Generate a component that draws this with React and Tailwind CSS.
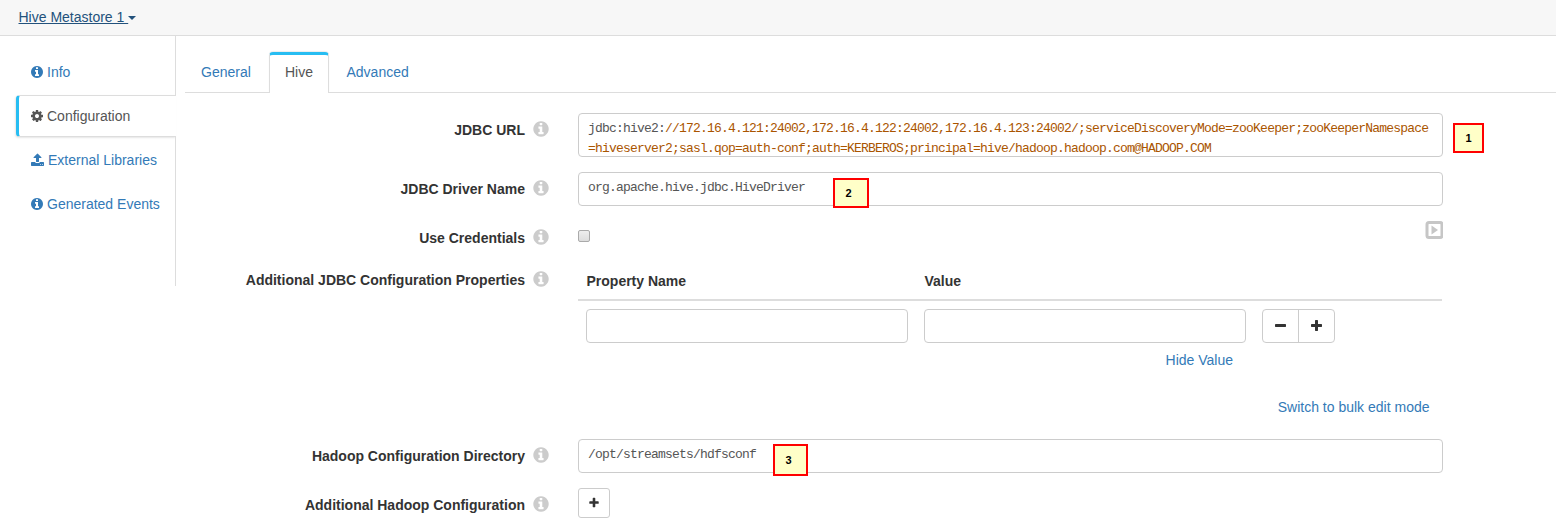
import React from "react";

const PATHS = {
  info: "M1152 1376v-160q0-14-9-23t-23-9h-96v-512q0-14-9-23t-23-9h-320q-14 0-23 9t-9 23v160q0 14 9 23t23 9h96v320h-96q-14 0-23 9t-9 23v160q0 14 9 23t23 9h448q14 0 23-9t9-23zm-128-896v-160q0-14-9-23t-23-9h-192q-14 0-23 9t-9 23v160q0 14 9 23t23 9h192q14 0 23-9t9-23zm640 416q0 209-103 385.5t-279.5 279.5-385.5 103-385.5-103-279.5-279.5-103-385.5 103-385.5 279.5-279.5 385.5-103 385.5 103 279.5 279.5 103 385.5z",
  cog: "M1152 896q0-106-75-181t-181-75-181 75-75 181 75 181 181 75 181-75 75-181zm512-109v222q0 12-8 23t-20 13l-185 28q-19 54-39 91 35 50 107 138 10 12 10 25t-9 23q-27 37-99 108t-94 71q-12 0-26-9l-138-108q-44 23-91 38-16 136-29 186-7 28-36 28h-222q-14 0-24.5-8.5t-11.5-21.5l-28-184q-49-16-90-37l-141 107q-10 9-25 9-14 0-25-11-126-114-165-168-7-10-7-23 0-12 8-23 15-21 51-66.5t54-70.5q-27-50-41-99l-183-27q-13-2-21-12.5t-8-23.5v-222q0-12 8-23t19-13l186-28q14-46 39-92-40-57-107-138-10-12-10-24 0-10 9-23 26-36 98.5-107.5t94.5-71.5q13 0 26 10l138 107q44-23 91-38 16-136 29-186 7-28 36-28h222q14 0 24.5 8.5t11.5 21.5l28 184q49 16 90 37l142-107q9-9 24-9 13 0 25 10 129 119 165 170 7 8 7 22 0 12-8 23-15 21-51 66.5t-54 70.5q26 50 41 98l183 28q13 2 21 12.5t8 23.5z",
  upload: "M1344 1472q0-26-19-45t-45-19-45 19-19 45 19 45 45 19 45-19 19-45zm256 0q0-26-19-45t-45-19-45 19-19 45 19 45 45 19 45-19 19-45zm128-224v320q0 40-28 68t-68 28h-1472q-40 0-68-28t-28-68v-320q0-40 28-68t68-28h427q21 56 70.5 92t110.5 36h256q61 0 110.5-36t70.5-92h427q40 0 68 28t28 68zm-325-648q-17 40-59 40h-256v448q0 26-19 45t-45 19h-256q-26 0-45-19t-19-45v-448h-256q-42 0-59-40-17-39 14-69l448-448q18-19 45-19t45 19l448 448q31 30 14 69z",
  plus: "M1600 736v192q0 40-28 68t-68 28h-416v416q0 40-28 68t-68 28h-192q-40 0-68-28t-28-68v-416h-416q-40 0-68-28t-28-68v-192q0-40 28-68t68-28h416v-416q0-40 28-68t68-28h192q40 0 68 28t28 68v416h416q40 0 68 28t28 68z",
  minus: "M1600 736v192q0 40-28 68t-68 28h-1216q-40 0-68-28t-28-68v-192q0-40 28-68t68-28h1216q40 0 68 28t28 68z",
};

function Icon({ name, box = "128 0 1536 1792", className }) {
  return (
    <svg viewBox={box} className={`shrink-0 fill-current ${className}`}>
      <path d={PATHS[name]} />
    </svg>
  );
}

function SideItem({ icon, box, size = "w-3 h-3.5", active, children }) {
  return (
    <li
      className={
        active
          ? "ml-px flex h-[42px] w-[160px] items-center gap-1 rounded-l border-y border-l-[3px] border-y-[#ddd] border-l-[#27bdf2] bg-white pl-3 text-[#555] shadow-[-1px_1px_2px_rgba(0,0,0,0.1)]"
          : "flex h-[42px] w-[160px] items-center gap-1 pl-4 text-[#337ab7]"
      }
    >
      <Icon name={icon} box={box} className={size} />
      <span>{children}</span>
    </li>
  );
}

function Row({ label, className, labelClass = "", children }) {
  return (
    <div className={`flex items-start ${className}`}>
      <div className={`flex w-[364px] items-center justify-end gap-2 ${labelClass}`}>
        <span className="font-bold text-[#333]">{label}</span>
        <Icon name="info" className="mb-0.5 h-[18px] w-4 text-[#ccc]" />
      </div>
      <div className="ml-[29px] w-[865px]">{children}</div>
    </div>
  );
}

function Code({ className, children }) {
  return (
    <div
      className={`overflow-hidden rounded border border-[#ccc] bg-white px-[9px] font-['Liberation_Mono',monospace] text-[13px] leading-5 tracking-[-0.8px] text-[#555] ${className}`}
    >
      {children}
    </div>
  );
}

function Callout({ className, children }) {
  return (
    <div
      className={`absolute flex items-center justify-center border-2 border-[#f00] bg-[#ffffc8] text-[11px] font-bold leading-none text-black ${className}`}
    >
      {children}
    </div>
  );
}

export default function App() {
  return (
    <div className="relative h-[525px] w-[1556px] overflow-hidden bg-white font-['Liberation_Sans',Arial,sans-serif] text-[14px] leading-5">
      <header className="flex h-9 items-center border-b border-[#ddd] bg-[#f7f7f7] pb-0.5 pl-[18.5px] text-[#23527c]">
        <a className="flex items-center">
          <span className="whitespace-pre underline">Hive Metastore 1 </span>
          <span className="mt-0.5 border-x-4 border-t-4 border-x-transparent border-t-[#23527c]" />
        </a>
      </header>

      <div className="flex">
        <nav className="ml-[15px] flex w-[170px] flex-col">
          <div className="h-[59px] w-[161px] border-r border-[#ddd] pt-[15px]">
            <ul><SideItem icon="info">Info</SideItem></ul>
          </div>
          <ul><SideItem icon="cog" active>Configuration</SideItem></ul>
          <ul className="flex h-[149px] w-[161px] flex-col gap-0.5 border-r border-[#ddd] pt-0.5">
            <SideItem icon="upload" box="64 0 1664 1792" size="w-[13px] h-3.5">External Libraries</SideItem>
            <SideItem icon="info">Generated Events</SideItem>
          </ul>
        </nav>

        <main className="flex-1">
          <div className="flex h-[57px] items-end">
            <div className="h-[41px] w-[84px] border-b border-[#ddd] pl-4 pt-[10px] text-[#337ab7]">General</div>
            <div className="h-[41px] w-[60px] rounded-t border-x border-t-[3px] border-x-[#ddd] border-t-[#27bdf2] pt-[7px] text-center text-[#555] shadow-[0_-1px_1px_rgba(0,0,0,0.08)]">Hive</div>
            <div className="h-[41px] flex-1 border-b border-[#ddd] pl-[17.5px] pt-[10px] text-[#337ab7]">Advanced</div>
          </div>

          <Row label="JDBC URL" className="mt-5" labelClass="pt-[7px]">
            <Code className="h-11 whitespace-pre pt-[5px]">
              jdbc:hive2:<span className="text-[#a50]">//172.16.4.121:24002,172.16.4.122:24002,172.16.4.123:24002/;serviceDiscoveryMode=zooKeeper;zooKeeperNamespace{"\n"}=hiveserver2;sasl.qop=auth-conf;auth=KERBEROS;principal=hive/hadoop.hadoop.com@HADOOP.COM</span>
            </Code>
          </Row>

          <Row label="JDBC Driver Name" className="mt-[15px]" labelClass="pt-[7px]">
            <Code className="h-[34px] pt-[5px]">org.apache.hive.jdbc.HiveDriver</Code>
          </Row>

          <Row label="Use Credentials" className="mt-[15px] h-[42px]" labelClass="pt-[7px]">
            <div className="flex items-start justify-between">
              <span className="mt-[9px] block h-3 w-3 rounded-[2px] border border-[#aaa] bg-linear-to-b from-[#eee] to-[#ddd]" />
              <svg viewBox="0 0 18 18" className="h-[18px] w-[18px]">
                <rect x="2" y="1.5" width="15" height="15" rx="2" fill="none" stroke="#c6c6c6" strokeWidth="3" />
                <path d="M6.5 4.5 13 9 6.5 13.5z" fill="#c6c6c6" />
              </svg>
            </div>
          </Row>

          <Row label="Additional JDBC Configuration Properties" className="h-[176px]" labelClass="pt-[7px]">
            <div className="flex h-[38px] w-[864px] border-b-2 border-[#ddd] pl-[8.5px] pt-2 font-bold text-[#333]">
              <span className="w-[338px]">Property Name</span>
              <span>Value</span>
            </div>
            <div className="flex gap-4 pl-2 pt-2">
              <div className="h-[34px] w-[322px] rounded border border-[#ccc]" />
              <div className="h-[34px] w-[322px] rounded border border-[#ccc]" />
              <div className="flex h-[34px] w-[73px] rounded border border-[#ccc] text-[#333]">
                <div className="flex w-9 items-center justify-center border-r border-[#ccc]">
                  <Icon name="minus" box="192 0 1408 1792" className="h-3.5 w-[11px]" />
                </div>
                <div className="flex flex-1 items-center justify-center">
                  <Icon name="plus" box="192 0 1408 1792" className="h-3.5 w-[11px]" />
                </div>
              </div>
            </div>
            <div className="mt-[7px] w-[655px] text-right text-[#337ab7]">Hide Value</div>
            <div className="mt-[27px] w-[851.5px] text-right text-[#337ab7]">Switch to bulk edit mode</div>
          </Row>

          <Row label="Hadoop Configuration Directory" labelClass="pt-[7px]">
            <Code className="h-[34px] pt-[5px]">/opt/streamsets/hdfsconf</Code>
          </Row>

          <Row label="Additional Hadoop Configuration" className="mt-[15px]" labelClass="pt-[7px]">
            <div className="flex h-[30px] w-8 items-center justify-center rounded-[3px] border border-[#ccc] text-[#333]">
              <Icon name="plus" box="192 0 1408 1792" className="h-3 w-[10px]" />
            </div>
          </Row>
        </main>
      </div>

      <Callout className="left-[1453px] top-[123px] h-[30px] w-[31px]">1</Callout>
      <Callout className="left-[833px] top-[178px] h-[30px] w-9 pr-[5px]">2</Callout>
      <Callout className="left-[773px] top-[444px] h-8 w-[35px] pr-1">3</Callout>
    </div>
  );
}
